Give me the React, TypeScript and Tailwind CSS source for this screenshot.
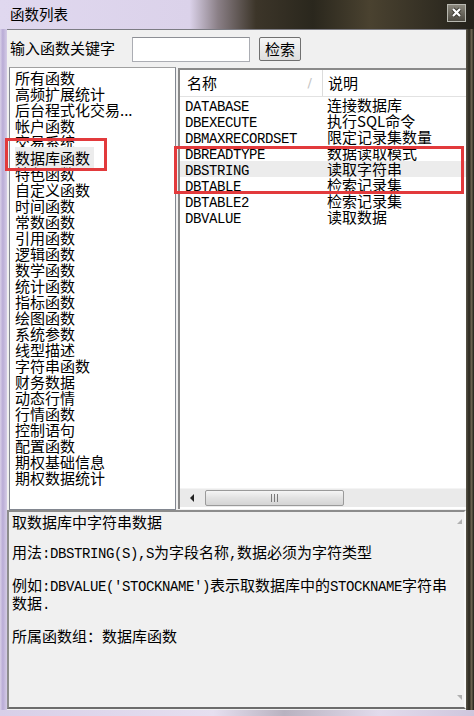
const CJK = "font-['Noto_Sans_CJK_SC',sans-serif]";

const GROUPS = [
  "所有函数",
  "高频扩展统计",
  "后台程式化交易...",
  "帐户函数",
  "交易系统",
  "数据库函数",
  "特色函数",
  "自定义函数",
  "时间函数",
  "常数函数",
  "引用函数",
  "逻辑函数",
  "数学函数",
  "统计函数",
  "指标函数",
  "绘图函数",
  "系统参数",
  "线型描述",
  "字符串函数",
  "财务数据",
  "动态行情",
  "行情函数",
  "控制语句",
  "配置函数",
  "期权基础信息",
  "期权数据统计",
];

const FUNCS = [
  { name: "DATABASE", desc: "连接数据库" },
  { name: "DBEXECUTE", desc: "执行SQL命令" },
  { name: "DBMAXRECORDSET", desc: "限定记录集数量" },
  { name: "DBREADTYPE", desc: "数据读取模式" },
  { name: "DBSTRING", desc: "读取字符串" },
  { name: "DBTABLE", desc: "检索记录集" },
  { name: "DBTABLE2", desc: "检索记录集" },
  { name: "DBVALUE", desc: "读取数据" },
];

// ascii runs in a fixed-width face, the rest in the CJK face
function Mixed({ text }: { text: string }) {
  const parts = text.split(/([\x20-\x7e]+)/);
  return (
    <>
      {parts.map((p, i) =>
        /^[\x20-\x7e]+$/.test(p) ? (
          <span key={i} className="font-['Liberation_Mono',monospace] text-[14px] tracking-[-0.4px]">
            {p}
          </span>
        ) : (
          <span key={i}>{p}</span>
        )
      )}
    </>
  );
}

export default function App() {
  return (
    <div className={`relative w-[474px] h-[716px] overflow-hidden bg-[#ddd5ec] text-black ${CJK}`}>
      {/* Title bar */}
      <div className="h-[29px] flex items-center justify-between pl-[10px] pr-[8px] bg-[linear-gradient(to_right,#e0d8ef_0%,#dbd2ea_40%,#8a7f86_46%,#3c3529_54%,#2a271d_66%,#4a4230_78%,#23211a_100%)]">
        <span className="text-[14.5px] leading-[16px] -mt-[2px]">函数列表</span>
        <div className="w-[19px] h-[18px] -mt-[4px] flex items-center justify-center border border-[#b8b8b0] bg-[linear-gradient(#8a877c,#4e4b42)]">
          <svg width="11" height="11" viewBox="0 0 11 11">
            <path d="M2 2 L9 9 M9 2 L2 9" stroke="#3a3830" strokeWidth="4" />
            <path d="M2 2 L9 9 M9 2 L2 9" stroke="#ffffff" strokeWidth="2.2" />
          </svg>
        </div>
      </div>

      <div className="flex h-[681px]">
        {/* left frame */}
        <div className="w-[7px] bg-[linear-gradient(to_right,#d8cfe8,#b9acd6_40%,#d5cce6)]" />

        {/* Client */}
        <div className="w-[459px] flex flex-col bg-[#f0f0f0] border-t border-[#7c7c84]">
          {/* search row */}
          <div className="h-[37px] flex items-start pt-[7px]">
            <span className="ml-[3px] mt-[3px] text-[15px] leading-[16px]">输入函数关键字</span>
            <div className="ml-[17px] w-[118px] h-[25px] bg-white border border-[#abadb3] border-t-[#8d8f95]" />
            <div className="ml-[9px] w-[42px] h-[24px] flex items-center justify-center border border-[#707070] rounded-[2px] bg-[linear-gradient(#f6f6f6,#dedede)] text-[15px] leading-[16px]">
              检索
            </div>
          </div>

          {/* lists */}
          <div className="h-[444px] flex items-start">
            {/* group list */}
            <div className="ml-[2px] w-[167px] h-[443px] bg-white border border-[#828790] border-t-[#a0a0a0] pt-[2px] pl-[5px]">
              {GROUPS.map((g) => (
                <div key={g} className="h-[16px] text-[15px] leading-[16px] whitespace-nowrap">
                  <span className={g === "数据库函数" ? "bg-[#ececec] pr-[4px]" : ""}>{g}</span>
                </div>
              ))}
            </div>

            {/* function list */}
            <div className="ml-[2px] flex-1 h-[441px] mt-[1px] flex flex-col bg-white border-l-2 border-t-2 border-[#8a8a8a]">
              <div className="h-[27px] flex items-center border-b border-[#e2e2e2] text-[15px] leading-[16px]">
                <div className="w-[143px] h-full flex items-center pl-[7px] border-r border-[#dcdcdc]">
                  名称
                  <span className="ml-auto mr-[10px] text-[13px] text-[#c4c4c4] font-['DejaVu_Sans',sans-serif]">/</span>
                </div>
                <div className="pl-[5px]">说明</div>
              </div>
              <div className="flex-1">
                {FUNCS.map((f) => (
                  <div
                    key={f.name}
                    className={`h-[16px] flex items-baseline ${f.name === "DBSTRING" ? "bg-[#ececec]" : ""}`}
                  >
                    <span className="w-[143px] pl-[5px] font-['Liberation_Mono',monospace] text-[14px] tracking-[-0.4px] leading-[16px]">
                      {f.name}
                    </span>
                    <span className="pl-[4px] text-[15px] leading-[16px]">{f.desc}</span>
                  </div>
                ))}
              </div>
              {/* horizontal scrollbar */}
              <div className="h-[19px] mb-[2px] flex items-stretch bg-[#eaeaea] border-t border-[#f4f4f4]">
                <div className="w-[25px] flex items-center justify-center">
                  <svg width="5" height="8" viewBox="0 0 5 8">
                    <path d="M4 0 L0 4 L4 8 Z" fill="#222" />
                  </svg>
                </div>
                <div className="w-[139px] my-[1px] flex items-center justify-center rounded-[2px] border border-[#9a9a9a] bg-[linear-gradient(#f5f5f5,#e2e2e2_50%,#d4d4d4)]">
                  <svg width="9" height="8" viewBox="0 0 9 8">
                    <path d="M1.5 0 V8 M4.5 0 V8 M7.5 0 V8" stroke="#7a7a7a" strokeWidth="1" />
                  </svg>
                </div>
                <div className="flex-1" />
              </div>
            </div>
          </div>

          {/* description */}
          <div className="mt-[-1px] h-[199px] flex border-2 border-[#8c8c8c] border-r-[#f8f8f8] border-b-[#6c6c6c]">
            <div className="flex-1 pl-[3px] pt-[2px] text-[15px] leading-[15px]">
              <div>取数据库中字符串数据</div>
              <div className="h-[15px]" />
              <div>
                <Mixed text="用法:DBSTRING(S),S为字段名称,数据必须为字符类型" />
              </div>
              <div className="h-[15px]" />
              <div>
                <Mixed text="例如:DBVALUE('STOCKNAME')表示取数据库中的STOCKNAME字符串" />
              </div>
              <div>
                <Mixed text="数据." />
              </div>
              <div className="h-[15px]" />
              <div>所属函数组：数据库函数</div>
            </div>
            <div className="w-[9px] flex flex-col justify-between items-center py-[7px]">
              <svg width="5" height="5" viewBox="0 0 5 5">
                <path d="M5 0 L5 5 L0 5 Z" fill="#b0b0b0" />
              </svg>
              <svg width="5" height="5" viewBox="0 0 5 5">
                <path d="M0 0 L5 0 L5 5 Z" fill="#b0b0b0" />
              </svg>
            </div>
          </div>
        </div>

        {/* right frame */}
        <div className="w-[8px] bg-[linear-gradient(to_right,#5a5548,#2a281f_40%,#6b6450_70%,#1c1b16)]" />
      </div>

      {/* bottom frame */}
      <div className="h-[6px] bg-[linear-gradient(to_right,#d8cfe8,#e6dff0_45%,#b9b2c0_60%,#e2dbec_80%,#cfc6dd)]" />

      {/* red annotation boxes */}
      <div className="absolute left-[5px] top-[138px] w-[102px] h-[33px] border-[3px] border-[#e23a3c]" />
      <div className="absolute left-[174px] top-[146px] w-[290px] h-[48px] border-[3px] border-[#e23a3c]" />
    </div>
  );
}
